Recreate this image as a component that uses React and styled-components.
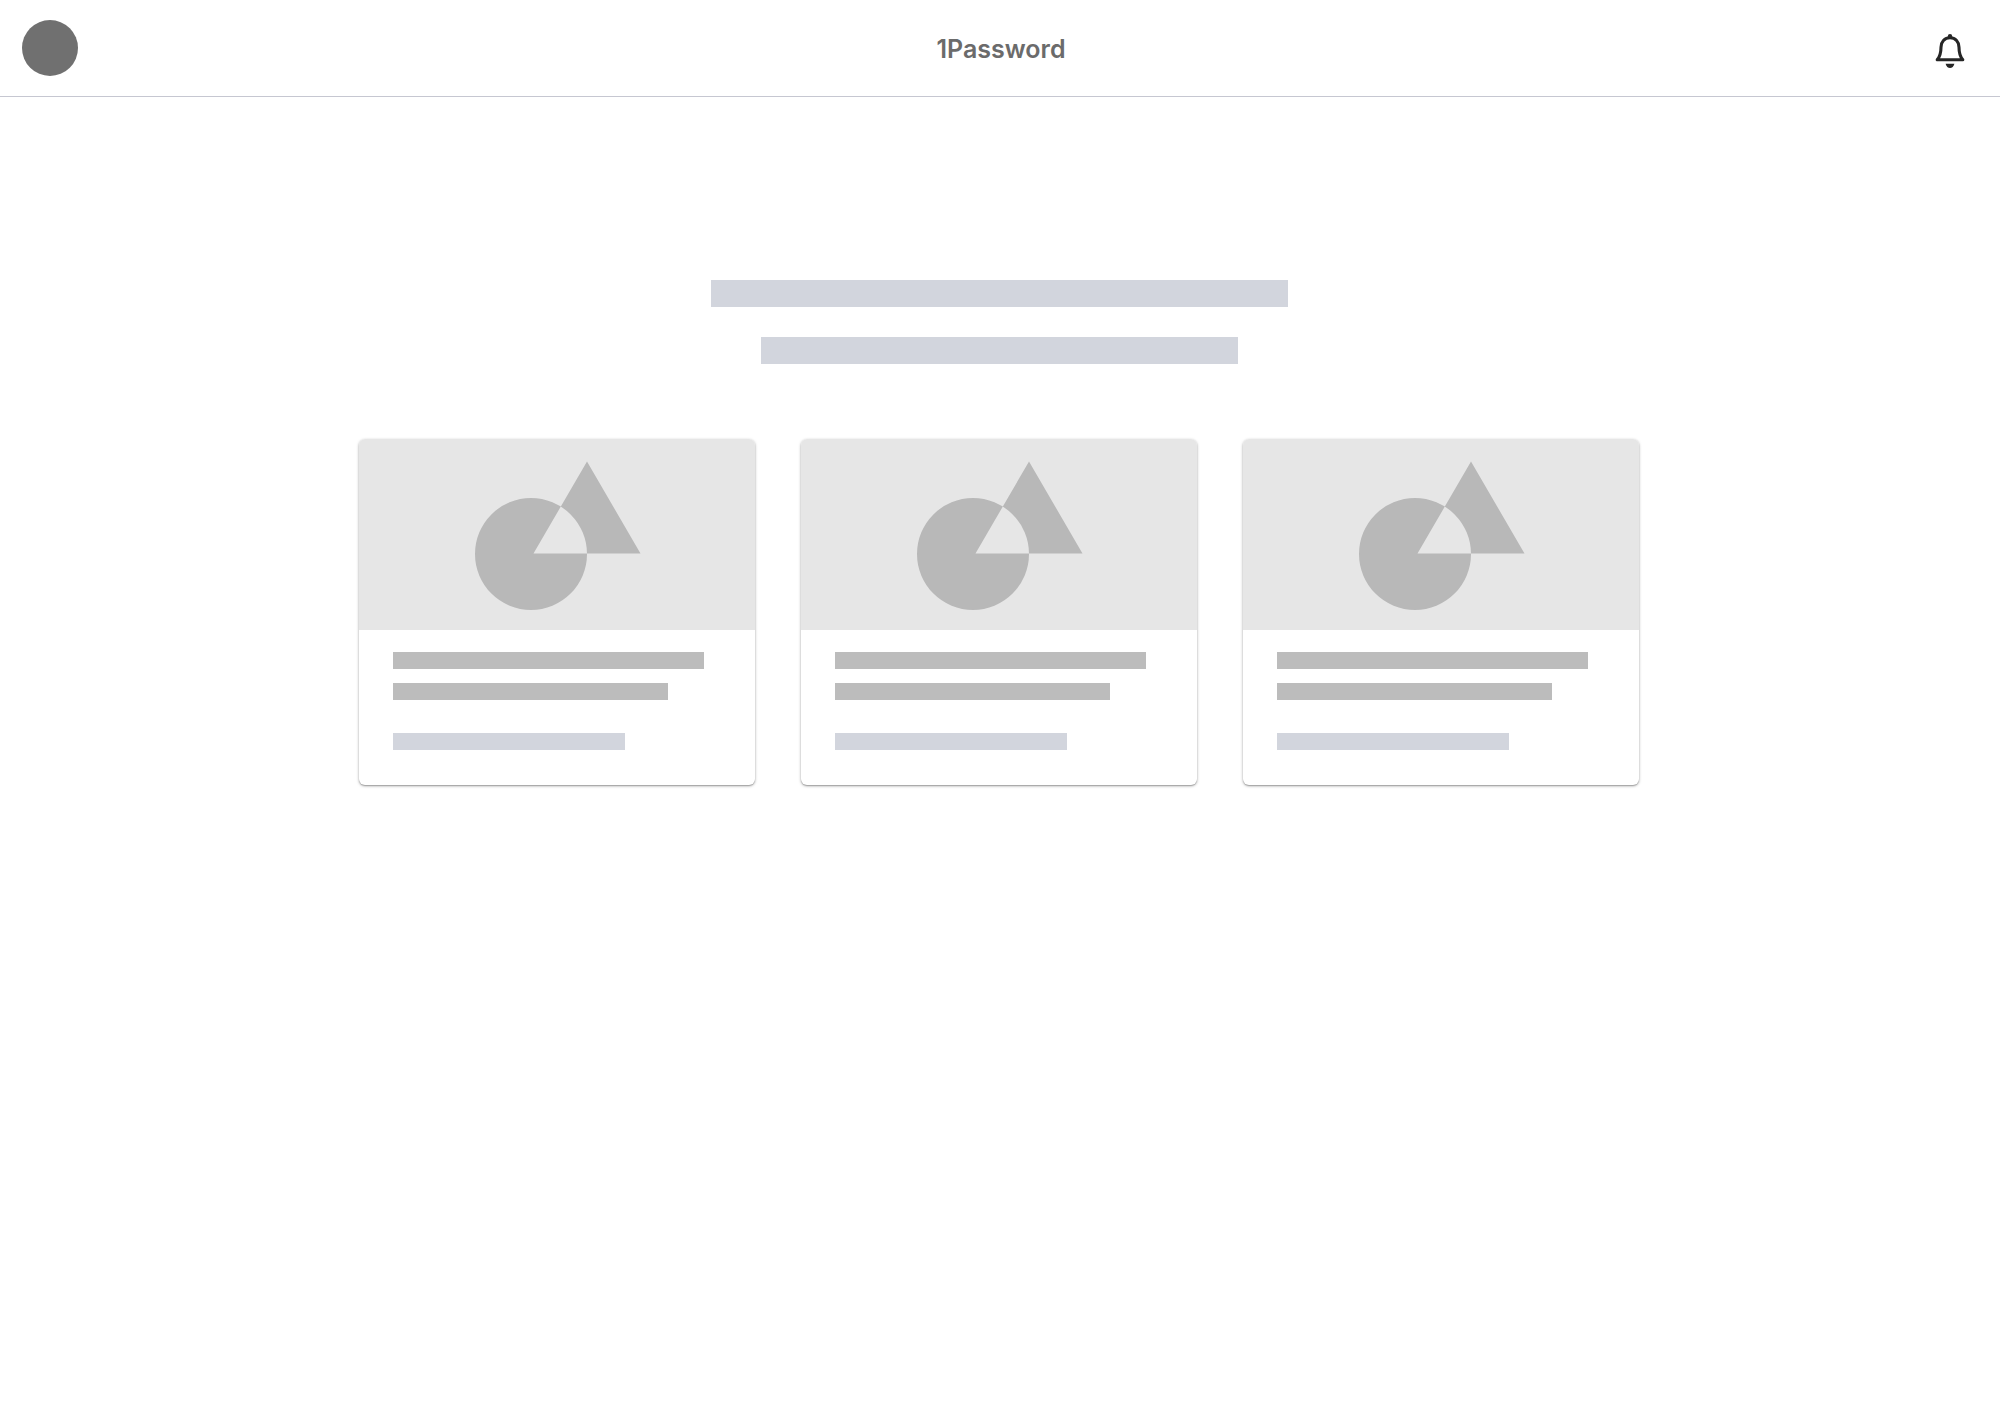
import React from "react";
import styled, { createGlobalStyle } from "styled-components";

const GlobalStyle = createGlobalStyle`
  *, *::before, *::after { box-sizing: border-box; }
  body {
    margin: 0;
    background: #ffffff;
    font-family: Inter, "Liberation Sans", sans-serif;
  }
`;

const Header = styled.header`
  display: grid;
  grid-template-columns: 1fr auto 1fr;
  align-items: center;
  height: 97px;
  padding: 0 22px;
  border-bottom: 1px solid #c6c7d1;
`;

const Avatar = styled.button`
  width: 56px;
  height: 56px;
  padding: 0;
  border: 0;
  border-radius: 50%;
  background: #707070;
`;

const Title = styled.h1`
  margin: 0;
  padding: 2px 0 0 2px;
  font-size: 25px;
  line-height: 32px;
  font-weight: 600;
  color: #6b6b6b;
`;

const BellButton = styled.button`
  justify-self: end;
  display: grid;
  place-items: center;
  width: 56px;
  height: 56px;
  padding: 6px 0 0;
  border: 0;
  background: none;
  color: #262626;
`;

const Main = styled.main`
  display: flex;
  flex-direction: column;
  align-items: center;
  padding: 183px 26px 64px 24px;
`;

const Intro = styled.section`
  display: flex;
  flex-direction: column;
  align-items: center;
  gap: 30px;
  width: 100%;
  margin-bottom: 75px;
`;

const Bar = styled.div`
  width: ${(p) => p.$width}px;
  max-width: 100%;
  height: ${(p) => (p.$large ? 27 : 17)}px;
  background: ${(p) => (p.$dark ? "#bcbcbc" : "#d2d5dd")};
`;

const CardGrid = styled.section`
  display: grid;
  grid-template-columns: repeat(3, 1fr);
  gap: 46px;
  width: 100%;
  max-width: 1280px;
`;

const Card = styled.article`
  overflow: hidden;
  border-radius: 6px;
  background: #ffffff;
  box-shadow: 0 1px 3px rgba(0, 0, 0, 0.34), 0 1px 1px rgba(0, 0, 0, 0.16);
`;

const Cover = styled.div`
  height: 191px;
  background: #e6e6e6;
`;

const Shapes = styled.svg`
  display: block;
  width: 100%;
  height: 100%;
`;

const CardBody = styled.div`
  display: flex;
  flex-direction: column;
  gap: 33px;
  padding: 22px 34px 35px;
`;

const Lines = styled.div`
  display: flex;
  flex-direction: column;
  gap: 14px;
`;

function BellIcon() {
  return (
    <svg width="32" height="36" viewBox="0 0 32 36" aria-hidden="true">
      <path
        d="M16 4.8C10.5 4.8 7 8.8 7 14.2C7 20.5 6 23.4 3.2 26.8H28.8C26 23.4 25 20.5 25 14.2C25 8.8 21.5 4.8 16 4.8Z"
        fill="none"
        stroke="currentColor"
        strokeWidth="3.1"
        strokeLinejoin="round"
      />
      <circle cx="16" cy="3.2" r="2.2" fill="currentColor" />
      <path d="M11.6 30.8H20.4C19.8 33.6 18 35 16 35S12.2 33.6 11.6 30.8Z" fill="currentColor" />
    </svg>
  );
}

function PlaceholderCard() {
  return (
    <Card>
      <Cover>
        <Shapes viewBox="0 0 396 191" aria-hidden="true">
          <path
            d="M116 115a56 56 0 1 0 112 0a56 56 0 1 0 -112 0ZM228 22.500L281.500 114.500H174.500Z"
            fill="#b8b8b8"
            fillRule="evenodd"
          />
        </Shapes>
      </Cover>
      <CardBody>
        <Lines>
          <Bar $dark $width={311} />
          <Bar $dark $width={275} />
        </Lines>
        <Bar $width={232} />
      </CardBody>
    </Card>
  );
}

export default function App() {
  return (
    <>
      <GlobalStyle />
      <Header>
        <Avatar type="button" aria-label="Account" />
        <Title>1Password</Title>
        <BellButton type="button" aria-label="Notifications">
          <BellIcon />
        </BellButton>
      </Header>
      <Main>
        <Intro>
          <Bar $large $width={577} />
          <Bar $large $width={477} />
        </Intro>
        <CardGrid>
          <PlaceholderCard />
          <PlaceholderCard />
          <PlaceholderCard />
        </CardGrid>
      </Main>
    </>
  );
}
